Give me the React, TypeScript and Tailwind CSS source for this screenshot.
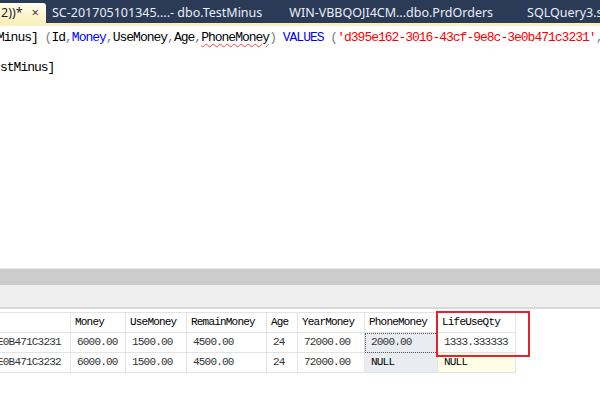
import React from 'react';

const cols = ['', 'Money', 'UseMoney', 'RemainMoney', 'Age', 'YearMoney', 'PhoneMoney', 'LifeUseQty'];

const rows = [
  ['E0B471C3231', '6000.00', '1500.00', '4500.00', '24', '72000.00', '2000.00', '1333.333333'],
  ['E0B471C3232', '6000.00', '1500.00', '4500.00', '24', '72000.00', 'NULL', 'NULL'],
];

function Tab({ label, left }: { label: string; left: string }) {
  return (
    <div className={`flex items-center pt-[4px] text-[12.5px] text-[#e9eef6] whitespace-nowrap ${left}`}>
      {label}
    </div>
  );
}

export default function App() {
  const mono = { fontFamily: '"Liberation Mono", "DejaVu Sans Mono", monospace' };

  return (
    <div
      className="relative w-[600px] h-[400px] overflow-hidden bg-white flex flex-col"
      style={{ fontFamily: '"Noto Sans", "Open Sans", sans-serif' }}
    >
      {/* document tabs */}
      <div className="h-[23px] shrink-0 bg-[#2b3a57] flex items-end overflow-hidden">
        <div className="h-[20px] w-[46px] shrink-0 flex items-center pl-[1px] rounded-tr-[3px] bg-gradient-to-b from-[#fffcec] to-[#fbefbb] text-[12.5px] text-[#1e1e1e]">
          <span>2))*</span>
          <span className="ml-[9px] text-[13px] text-[#3c3c3c]">×</span>
        </div>
        <div className="h-full flex">
          <Tab label="SC-201705101345....- dbo.TestMinus" left="ml-[6px]" />
          <Tab label="WIN-VBBQOJI4CM...dbo.PrdOrders" left="ml-[27px]" />
          <Tab label="SQLQuery3.sql" left="ml-[34px]" />
        </div>
      </div>
      <div className="h-[3px] shrink-0 bg-[#f9efbf]" />

      {/* query editor */}
      <div className="h-[242px] shrink-0 pt-[4px] text-[13px] leading-[15px] tracking-[-1px] whitespace-nowrap" style={mono}>
        <div className="-ml-[3px] text-black">
          <span>Minus] </span>
          <span className="text-[#808080]">(</span>
          <span>Id</span>
          <span className="text-[#808080]">,</span>
          <span className="text-[#0000ff]">Money</span>
          <span className="text-[#808080]">,</span>
          <span>UseMoney</span>
          <span className="text-[#808080]">,</span>
          <span>Age</span>
          <span className="text-[#808080]">,</span>
          <span className="underline decoration-wavy decoration-[#ff3b3b] decoration-1 underline-offset-2">PhoneMoney</span>
          <span className="text-[#808080]">) </span>
          <span className="text-[#0000ff]">VALUES </span>
          <span className="text-[#808080]">(</span>
          <span className="text-[#ff0000]">'d395e162-3016-43cf-9e8c-3e0b471c3231'</span>
          <span className="text-[#808080]">,</span>
        </div>
        <div className="h-[15px]" />
        <div className="text-black">stMinus]</div>
      </div>

      {/* splitter + results toolbar */}
      <div className="h-px shrink-0 bg-[#e6e6e6]" />
      <div className="h-[16px] shrink-0 bg-[#cccccc]" />
      <div className="h-[22px] shrink-0 bg-[#efefef]" />
      <div className="h-[2px] shrink-0 bg-[#d9d9d9]" />
      <div className="h-[3px] shrink-0" />

      {/* results grid */}
      <div
        className="grid grid-cols-[71px_55px_61px_80px_31px_67px_73px_78px] w-[516px] border-t border-[#e3e3e3] text-[11px] tracking-[-0.8px]"
        style={mono}
      >
        {cols.map((c, i) => (
          <div key={c + i} className="h-[20px] border-r border-b border-[#e3e3e3] pl-[4px] flex items-center text-black whitespace-nowrap overflow-hidden">
            {c}
          </div>
        ))}
        {rows.map((r, ri) =>
          r.map((v, ci) => {
            let bg = 'bg-white';
            if (ci === 6) bg = 'bg-[#e9edf2]';
            if (ci === 7 && ri === 1) bg = 'bg-[#fffde6]';
            const focus = ci === 6 && ri === 0 ? 'outline outline-1 outline-dotted outline-[#555] -outline-offset-1' : '';
            const nul = v === 'NULL' ? 'text-black' : 'text-[#333]';
            return (
              <div
                key={ri + '-' + ci}
                className={`h-[20px] border-r border-b border-[#e3e3e3] flex items-center whitespace-nowrap overflow-hidden ${ci === 0 ? 'pl-0' : 'pl-[6px]'} ${bg} ${focus} ${nul}`}
              >
                <span className={ci === 0 ? '-ml-[3px]' : ''}>{v}</span>
              </div>
            );
          })
        )}
      </div>

      {/* highlight box */}
      <div className="absolute left-[436px] top-[311px] w-[94px] h-[46px] border-2 border-[#e8222c]" />
    </div>
  );
}
